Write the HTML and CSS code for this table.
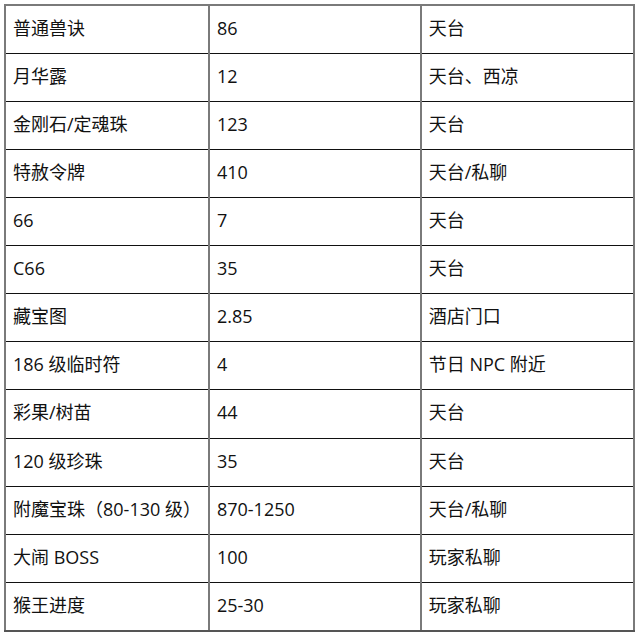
FILE: index.html
```html
<!DOCTYPE html>
<html lang="zh-CN">
<head>
<meta charset="utf-8">
<link rel="stylesheet" href="styles.css">
</head>
<body>
<div class="wrap">
<table class="price">
<colgroup><col class="c1"><col class="c2"><col class="c3"></colgroup>
<tbody>
<tr><td>普通兽诀</td><td>86</td><td>天台</td></tr>
<tr><td>月华露</td><td>12</td><td>天台、西凉</td></tr>
<tr><td>金刚石/定魂珠</td><td>123</td><td>天台</td></tr>
<tr><td>特赦令牌</td><td>410</td><td>天台/私聊</td></tr>
<tr><td>66</td><td>7</td><td>天台</td></tr>
<tr><td>C66</td><td>35</td><td>天台</td></tr>
<tr><td>藏宝图</td><td>2.85</td><td>酒店门口</td></tr>
<tr><td>186 级临时符</td><td>4</td><td>节日 NPC 附近</td></tr>
<tr><td>彩果/树苗</td><td>44</td><td>天台</td></tr>
<tr><td>120 级珍珠</td><td>35</td><td>天台</td></tr>
<tr><td>附魔宝珠（80-130 级）</td><td>870-1250</td><td>天台/私聊</td></tr>
<tr><td>大闹 BOSS</td><td>100</td><td>玩家私聊</td></tr>
<tr><td>猴王进度</td><td>25-30</td><td>玩家私聊</td></tr>
</tbody>
</table>
</div>
</body>
</html>
```
FILE: styles.css
```css
html, body {
  margin: 0;
  padding: 0;
  background: #fff;
}
.wrap {
  padding: 4px 0 0 4px;
}
.price {
  border-collapse: collapse;
  width: 631px;
  height: 628px;
  font-family: "Open Sans", "Noto Sans CJK SC", sans-serif;
  font-size: 18px;
  color: #111;
  border: 2px solid #7a7a7a;
}
.c1 { width: 204px; }
.c2 { width: 213px; }
.c3 { width: 214px; }
.price td {
  border-left: 2px solid #7a7a7a;
  border-right: 2px solid #7a7a7a;
  border-top: 1px solid #111;
  border-bottom: 1px solid #111;
  padding: 0 0 3px 7px;
  vertical-align: middle;
  white-space: nowrap;
  line-height: 24px;
}
.price tr:first-child td { border-top: 2px solid #7a7a7a; }
.price tr:last-child td { border-bottom: 2px solid #555; }
```
